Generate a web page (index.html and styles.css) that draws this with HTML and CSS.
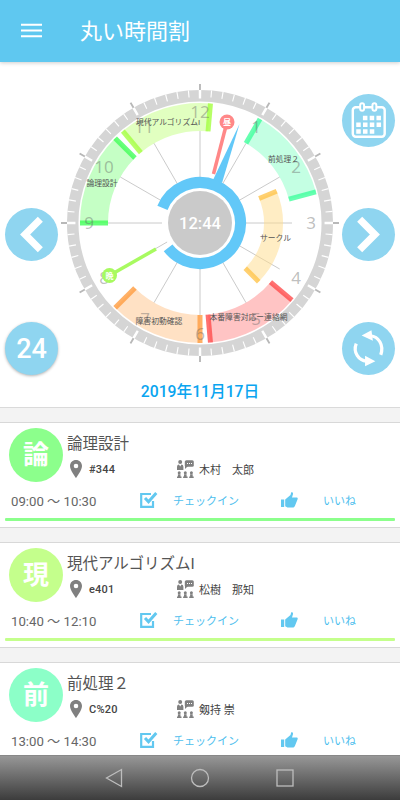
FILE: index.html
```html
<!DOCTYPE html>
<html lang="ja">
<head>
    <meta charset="UTF-8">
    <meta name="viewport" content="width=device-width, initial-scale=1.0">
    <title>丸い時間割</title>
    <link rel="stylesheet" href="styles.css">
</head>
<body>
    <svg class="symbols">
        <symbol id="pin" viewBox="0 0 12 18">
            <path fill-rule="evenodd" d="M6 0C2.6 0 0 2.6 0 6c0 4.300 6 12 6 12s6-7.700 6-12c0-3.400-2.600-6-6-6zm0 8.300a2.300 2.300 0 1 1 0-4.600 2.300 2.300 0 0 1 0 4.600z"/>
        </symbol>
        <symbol id="teacher" viewBox="0 0 17 18">
            <circle cx="3.200" cy="2.100" r="2"/>
            <path d="M0 10V7c0-1.700 1-2.500 2-2.500l1.200 2 1.200-2c1 0 2 .8 2 2.500v3z"/>
            <rect x="7.800" y="0.300" width="9" height="6.400" rx="1.500"/>
            <path d="M8 5v4l3-3z"/>
            <path class="cut" d="M10 3h1v1h-1zM12 3h1v1h-1zM14 3h1v1h-1z"/>
            <circle cx="2.200" cy="12.700" r="1.500"/><circle cx="8.300" cy="12.700" r="1.500"/><circle cx="14.400" cy="12.700" r="1.500"/>
            <path d="M.9 14.300h2.600v2.200h1V18H0v-1.500h.9zM7 14.300h2.600v2.200h1V18H6.100v-1.500H7zM13.100 14.300h2.600v2.200h1V18h-4.500v-1.500h.9z"/>
        </symbol>
        <symbol id="check" viewBox="0 0 18 16">
            <path class="box" d="M11 2H1.200v12.800H13V9"/>
            <path class="tick" d="M5 6l3.500 3.700L16.300 1"/>
        </symbol>
        <symbol id="like" viewBox="0 0 17 16">
            <path d="M0 7.500h3.200V15H0zM4.200 14.300V7.500L9.500 3l.7-2.700c.8-.5 2.300.2 1.700 2.200L11 5.500h4.500c1.200 0 1.500 1 1 2l-2.300 5.700c-.6 1.600-1.200 2.300-2.700 2.300H6.500z"/>
        </symbol>
    </svg>

    <header class="toolbar">
        <svg class="menu-icon" viewBox="0 0 22 16"><path d="M0 1.500h22M0 7.500h22M0 13.500h22"/></svg>
        <h1>丸い時間割</h1>
    </header>

    <section class="clock-panel">
        <div class="clock-row">
            <div class="side">
                <button class="round"><svg viewBox="0 0 54 54"><path class="arrow" d="M36 11.500L20.500 27 36 42.500"/></svg></button>
                <button class="round raised">24</button>
            </div>

            <svg class="clock" viewBox="-142 -142 284 284">
                <!-- dial -->
                <circle class="dial" r="127.300"/>
                <circle class="dial-ticks" r="129.500" pathLength="360" transform="rotate(-0.250)"/>
                <circle class="hour-cuts" r="128.800" pathLength="360" transform="rotate(-0.550)"/>
                <circle class="hour-ticks" r="136" pathLength="360" transform="rotate(-0.400)"/>
                <path class="spokes" d="M0-38V-92M19-32.900L46-79.700M32.900-19L79.700-46M38 0H92M32.900 19L79.700 46M19 32.900L46 79.700M0 38V92M-19 32.900L-46 79.700M-32.900 19L-79.700 46M-38 0H-92M-32.900-19L-79.700-46M-19-32.900L-46-79.700"/>

                <!-- lessons -->
                <g class="lesson">
                    <circle r="106" pathLength="360" stroke="#8cff8c" stroke-dasharray="45 315" transform="rotate(180)"/>
                    <circle r="106" pathLength="360" stroke="#c4ff82" stroke-dasharray="45 315" transform="rotate(230)"/>
                    <circle r="106" pathLength="360" stroke="#8affc8" stroke-dasharray="45 315" transform="rotate(-60)"/>
                    <circle r="106" pathLength="360" stroke="#ff8a8a" stroke-dasharray="45 315" transform="rotate(40)"/>
                    <circle r="106" pathLength="360" stroke="#ffc48a" stroke-dasharray="45 315" transform="rotate(90)"/>
                    <circle class="inner" r="73.500" pathLength="360" stroke="#ffdc8a" stroke-dasharray="67.500 292.500" transform="rotate(-22.500)"/>
                </g>
                <g class="edge">
                    <path stroke="#41ff58" d="M0-92V-120" transform="rotate(270)"/>
                    <path stroke="#41ff58" d="M0-92V-120" transform="rotate(315)"/>
                    <path stroke="#a4ff40" d="M0-92V-120" transform="rotate(320)"/>
                    <path stroke="#a4ff40" d="M0-92V-120" transform="rotate(5)"/>
                    <path stroke="#40ff9c" d="M0-92V-120" transform="rotate(30)"/>
                    <path stroke="#40ff9c" d="M0-92V-120" transform="rotate(75)"/>
                    <path stroke="#ffc44c" d="M0-64V-83" transform="rotate(67.500)"/>
                    <path stroke="#ffc44c" d="M0-64V-83" transform="rotate(135)"/>
                    <path stroke="#ff4c4c" d="M0-92V-120" transform="rotate(130)"/>
                    <path stroke="#ff4c4c" d="M0-92V-120" transform="rotate(175)"/>
                    <path stroke="#ff9c40" d="M0-92V-120" transform="rotate(180)"/>
                    <path stroke="#ff9c40" d="M0-92V-120" transform="rotate(225)"/>
                </g>

                <g class="hours">
                    <text x="0" y="-105">12</text>
                    <text x="56" y="-90">1</text>
                    <text x="96" y="-50">2</text>
                    <text x="111" y="6">3</text>
                    <text x="96" y="61">4</text>
                    <text x="56" y="102">5</text>
                    <text x="0" y="117">6</text>
                    <text x="-55" y="102">7</text>
                    <text x="-96" y="61">8</text>
                    <text x="-111" y="6">9</text>
                    <text x="-96" y="-50">10</text>
                    <text x="-56" y="-90">11</text>
                </g>

                <!-- current time hand -->
                <circle class="now-ring" r="40.500" pathLength="360" transform="rotate(-158)"/>
                <path class="now-hand" d="M13-43L39.500-99 22-40z"/>
                <circle class="hub" r="32"/>
                <text class="time" y="6">12:44</text>

                <g class="mark noon">
                    <path d="M27-101L13.500-49"/>
                    <circle cx="27" cy="-101" r="7.500"/>
                    <text x="27" y="-98">昼</text>
                </g>
                <g class="mark night">
                    <path d="M-90.500 52.500L-44 26"/>
                    <circle cx="-90.500" cy="52.500" r="7.500"/>
                    <text x="-90.500" y="55.500">晩</text>
                </g>

                <g class="names">
                    <text x="-32" y="-98">現代アルゴリズムI</text>
                    <text x="-98" y="-37.500">論理設計</text>
                    <text x="83.500" y="-61.500">前処理２</text>
                    <text x="75.500" y="18">サークル</text>
                    <text x="48.500" y="97">本番障害対応ー連絡網</text>
                    <text x="-41" y="101">障害初動確認</text>
                </g>
            </svg>

            <div class="side">
                <button class="round">
                    <svg viewBox="0 0 54 54">
                        <rect class="cal" x="11" y="13.500" width="32.500" height="30" rx="3"/>
                        <path class="cal-ring" d="M20.500 11.500v3.500M33 11.500v3.500"/>
                        <path class="cal-gap" d="M20.500 11.500v3.500M33 11.500v3.500"/>
                        <path class="cal-days" d="M21.300 24.500h18.500M14.500 31.300h25.300M14.500 38.100h18.500"/>
                    </svg>
                </button>
                <button class="round"><svg viewBox="0 0 54 54"><path class="arrow" d="M18 11.500L33.500 27 18 42.500"/></svg></button>
                <button class="round">
                    <svg viewBox="0 0 54 54">
                        <path class="turn" d="M29 14c8 .8 14 9 10.500 19.500M25 40c-8-.8-14-9-10.500-18"/>
                        <path class="turn-head" d="M20 13.800l10-5.300 1.500 10.500zM34 40l-10.500-5.500v10.500z"/>
                    </svg>
                </button>
            </div>
        </div>
        <p class="date">2019年11月17日</p>
    </section>

    <main class="list">
        <article class="card green">
            <div class="info">
                <span class="badge">論</span>
                <div class="detail">
                    <h2>論理設計</h2>
                    <div class="meta">
                        <svg class="pin"><use href="#pin"/></svg><span class="room">#344</span>
                        <svg class="teacher"><use href="#teacher"/></svg><span>木村　太郎</span>
                    </div>
                </div>
            </div>
            <div class="actions">
                <span class="period">09:00 ～ 10:30</span>
                <svg class="check"><use href="#check"/></svg><a class="checkin">チェックイン</a>
                <svg class="like"><use href="#like"/></svg><a>いいね</a>
            </div>
            <div class="line"></div>
        </article>

        <article class="card lime">
            <div class="info">
                <span class="badge">現</span>
                <div class="detail">
                    <h2>現代アルゴリズムI</h2>
                    <div class="meta">
                        <svg class="pin"><use href="#pin"/></svg><span class="room">e401</span>
                        <svg class="teacher"><use href="#teacher"/></svg><span>松樹　那知</span>
                    </div>
                </div>
            </div>
            <div class="actions">
                <span class="period">10:40 ～ 12:10</span>
                <svg class="check"><use href="#check"/></svg><a class="checkin">チェックイン</a>
                <svg class="like"><use href="#like"/></svg><a>いいね</a>
            </div>
            <div class="line"></div>
        </article>

        <article class="card mint">
            <div class="info">
                <span class="badge">前</span>
                <div class="detail">
                    <h2>前処理２</h2>
                    <div class="meta">
                        <svg class="pin"><use href="#pin"/></svg><span class="room">C%20</span>
                        <svg class="teacher"><use href="#teacher"/></svg><span>剱持 崇</span>
                    </div>
                </div>
            </div>
            <div class="actions">
                <span class="period">13:00 ～ 14:30</span>
                <svg class="check"><use href="#check"/></svg><a class="checkin">チェックイン</a>
                <svg class="like"><use href="#like"/></svg><a>いいね</a>
            </div>
            <div class="line"></div>
        </article>
    </main>

    <nav class="system-bar">
        <svg viewBox="0 0 20 20"><path d="M16.500 1.500v17L1.500 10z"/></svg>
        <svg viewBox="0 0 20 20"><circle cx="10" cy="10" r="8.500"/></svg>
        <svg viewBox="0 0 20 20"><rect x="2" y="2" width="16" height="16"/></svg>
    </nav>
</body>
</html>
```

FILE: styles.css
```css
* {
    box-sizing: border-box;
}

body {
    margin: 0;
    height: 100vh;
    overflow: hidden;
    display: flex;
    flex-direction: column;
    background: #f3f3f3;
    color: #555;
    font-family: Roboto, "Noto Sans CJK JP", sans-serif;
}

h1, h2, p {
    margin: 0;
}

.symbols {
    display: none;
}

/* toolbar */
.toolbar {
    flex: none;
    height: 62px;
    display: flex;
    align-items: center;
    gap: 38px;
    padding-left: 21px;
    background: #5fc8f0;
    color: white;
    box-shadow: 0 1px 4px rgba(0, 0, 0, 0.2);
    z-index: 1;
}

.toolbar h1 {
    font-size: 22px;
    font-weight: 400;
    line-height: 30px;
    padding-top: 1px;
}

.menu-icon {
    width: 21px;
    height: 16px;
    stroke: white;
    stroke-width: 2.2;
}

/* clock */
.clock-panel {
    flex: none;
    height: 346px;
    padding: 19px 5px 0;
    background: white;
    border-bottom: 1px solid #dadada;
}

.clock-row {
    display: flex;
    height: 296px;
}

.side {
    width: 53px;
    flex: none;
    display: flex;
    flex-direction: column;
    justify-content: flex-end;
    gap: 61px;
    padding-bottom: 2px;
}

.round {
    width: 53px;
    height: 53px;
    padding: 0;
    border: none;
    border-radius: 50%;
    background: #8fd5f0;
    color: white;
    font-family: Roboto, sans-serif;
    font-size: 27px;
    font-weight: 500;
}

.round svg {
    display: block;
    width: 53px;
    height: 53px;
    fill: none;
    stroke: white;
}

.raised {
    box-shadow: 0 1px 3px rgba(0, 0, 0, 0.3);
}

.arrow {
    stroke-width: 7.3;
}

.cal {
    stroke-width: 2.5;
}

.cal-ring {
    stroke-width: 6;
    stroke-linecap: round;
}

.cal-gap {
    stroke: #8fd5f0;
    stroke-width: 2;
    stroke-linecap: round;
}

.cal-days {
    stroke-width: 4.6;
    stroke-dasharray: 4.6 2.3;
}

.turn {
    stroke-width: 3.3;
}

.turn-head {
    fill: white;
    stroke: none;
}

.clock {
    width: 284px;
    height: 284px;
    flex: none;
}

.clock circle, .clock path {
    fill: none;
}

.dial {
    stroke: #d5d5d5;
    stroke-width: 11.5;
}

.dial-ticks {
    stroke: white;
    stroke-width: 7;
    stroke-dasharray: 0.5 4.5;
}

.hour-cuts {
    stroke: white;
    stroke-width: 8.5;
    stroke-dasharray: 1.1 28.9;
}

.hour-ticks {
    stroke: #b8b8b8;
    stroke-width: 6;
    stroke-dasharray: 0.8 29.2;
}

.spokes {
    stroke: #c4c4c4;
    stroke-width: 0.9;
}

.lesson circle {
    stroke-width: 28;
    opacity: 0.5;
}

.lesson .inner {
    stroke-width: 19;
}

.edge path {
    stroke-width: 5;
    opacity: 0.8;
}

.hours text {
    fill: rgba(100, 100, 100, 0.42);
    font-family: "Noto Sans", sans-serif;
    font-size: 17px;
    text-anchor: middle;
}

.clock .now-ring {
    stroke: #62c8f8;
    stroke-width: 11;
    stroke-dasharray: 300 60;
}

.clock .now-hand {
    fill: #62c8f8;
}

.clock .hub {
    fill: #cacaca;
}

.time {
    fill: white;
    font-size: 16.5px;
    font-weight: 500;
    text-anchor: middle;
}

.mark path {
    stroke-width: 3.5;
}

.mark text {
    fill: white;
    font-size: 8px;
    font-weight: 700;
    text-anchor: middle;
}

.noon path {
    stroke: #ff8888;
}

.clock .noon circle {
    fill: #ff8888;
}

.night path {
    stroke: #a8fa60;
}

.clock .night circle {
    fill: #a8fa60;
}

.names text {
    fill: #555;
    font-size: 7.8px;
    text-anchor: middle;
}

.date {
    color: #0aa5f0;
    font-size: 15.7px;
    font-weight: 500;
    line-height: 24px;
    text-align: center;
    margin-top: 3px;
}

/* lesson cards */
.list {
    flex: 1;
    min-height: 0;
    overflow: hidden;
    display: flex;
    flex-direction: column;
    gap: 14px;
    padding-top: 14px;
}

.card {
    flex: none;
    height: 106px;
    padding: 5px 5px 0;
    background: white;
    border-top: 1px solid #d8d8d8;
    border-bottom: 1px solid #d8d8d8;
}

.info {
    display: flex;
    gap: 4px;
    padding-left: 4px;
}

.badge {
    width: 54px;
    height: 54px;
    flex: none;
    border-radius: 50%;
    background: var(--tint);
    color: white;
    font-size: 26px;
    font-weight: 700;
    line-height: 54px;
    text-align: center;
}

.detail h2 {
    font-size: 15.5px;
    font-weight: 400;
    line-height: 24px;
    margin-top: 4px;
}

.meta {
    display: flex;
    align-items: center;
    height: 24px;
    margin-top: 1px;
    padding-left: 3px;
    font-size: 11px;
    color: #444;
}

.pin {
    width: 12px;
    height: 18px;
    fill: #808080;
    margin-right: 7px;
}

.room {
    width: 88px;
    font-weight: 500;
    letter-spacing: 0.2px;
}

.teacher {
    width: 17px;
    height: 18px;
    fill: #808080;
    margin-right: 5px;
}

.cut {
    fill: white;
}

.actions {
    display: flex;
    align-items: center;
    height: 24px;
    margin-top: 6px;
    padding-left: 6px;
    font-size: 11px;
    color: #4fc0ee;
}

.period {
    width: 129px;
    color: #666;
    font-size: 13.2px;
}

.check {
    width: 18px;
    height: 16px;
    margin-right: 15px;
    fill: none;
    stroke: #62c8f0;
}

.box {
    stroke-width: 2.2;
}

.tick {
    stroke-width: 3;
}

.checkin {
    width: 108px;
}

.like {
    width: 17px;
    height: 16px;
    margin-right: 25px;
    fill: #62c8f0;
}

.line {
    height: 3px;
    margin-top: 6px;
    background: var(--tint);
    border-radius: 1px;
}

.green {
    --tint: #8cff8c;
}

.lime {
    --tint: #c4ff8c;
}

.mint {
    --tint: #8cffc8;
}

/* android navigation */
.system-bar {
    flex: none;
    height: 45px;
    display: flex;
    align-items: center;
    justify-content: center;
    gap: 65px;
    background: linear-gradient(#979797, #3c3c3c);
    border-top: 1px solid #888;
}

.system-bar svg {
    width: 20px;
    height: 20px;
    fill: none;
    stroke: #bdbdbd;
    stroke-width: 1.3;
}
```
